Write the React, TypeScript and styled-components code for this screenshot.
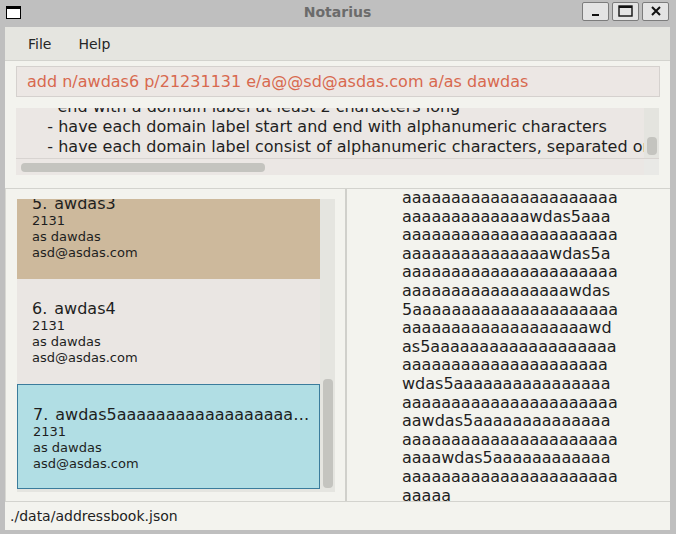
import React from 'react';
import styled, { createGlobalStyle } from 'styled-components';

const GlobalStyle = createGlobalStyle`
  html, body {
    margin: 0;
    padding: 0;
    background: #bfbfbf;
    font-family: "DejaVu Sans", "Liberation Sans", sans-serif;
  }
`;

const Window = styled.div`
  width: 676px;
  height: 534px;
  display: flex;
  flex-direction: column;
  background: #bfbfbf;
  overflow: hidden;
`;

const TitleBar = styled.div`
  height: 27px;
  flex: none;
  display: grid;
  grid-template-columns: 1fr auto 1fr;
  align-items: center;
  padding: 0 7px 0 6px;
`;

const AppIcon = styled.div`
  width: 13px;
  height: 9px;
  border: 1px solid #000;
  border-top-width: 3px;
  background: #fff;
  margin-top: -2px;
`;

const Title = styled.div`
  font-size: 14px;
  font-weight: bold;
  color: #6b6b6b;
  margin-top: -3px;
`;

const WinButtons = styled.div`
  justify-self: end;
  display: flex;
  gap: 3px;
  margin-top: -5px;
`;

const WinButton = styled.div`
  width: 25px;
  height: 17px;
  border: 1px solid #7c7c7c;
  border-radius: 2px;
  background: #e4e4e4;
  display: flex;
  align-items: center;
  justify-content: center;
`;

const Frame = styled.div`
  flex: 1;
  margin: 0 6px 4px 5px;
  display: flex;
  flex-direction: column;
  background: #f3f3ee;
  min-height: 0;
`;

const MenuBar = styled.div`
  height: 33px;
  flex: none;
  display: flex;
  align-items: center;
  gap: 27px;
  padding-left: 23px;
  background: #e5e5e0;
  border-bottom: 1px solid #d3d3ce;
  font-size: 14px;
  color: #262626;
`;

const TopSection = styled.div`
  flex: none;
  height: 127px;
  padding: 5px 10px 0 11px;
  box-sizing: border-box;
  display: flex;
  flex-direction: column;
  gap: 11px;
`;

const CommandBox = styled.div`
  height: 31px;
  flex: none;
  box-sizing: border-box;
  border: 1px solid #d5d1ce;
  background: #ece7e4;
  color: #d8694f;
  font-size: 16px;
  display: flex;
  align-items: center;
  padding-left: 10px;
  white-space: nowrap;
`;

const ResultBox = styled.div`
  height: 67px;
  flex: none;
  margin-right: 1px;
  display: grid;
  grid-template-columns: 1fr 15px;
  grid-template-rows: 1fr 16px;
  background: #ebe7e4;
`;

const ResultViewport = styled.div`
  overflow: hidden;
  border-bottom: 1px solid #d8d4d1;
`;

const ResultText = styled.pre`
  margin: -11px 0 0 11px;
  font-family: "DejaVu Sans", sans-serif;
  font-size: 16px;
  line-height: 20px;
  color: #1f1f1f;
`;

const VTrack = styled.div`
  background: #e4e4df;
  border-bottom: 1px solid #d8d4d1;
  display: flex;
  flex-direction: column;
  align-items: center;
  padding-top: 29px;
  box-sizing: border-box;
`;

const VThumb = styled.div<{ h: number }>`
  width: 10px;
  height: ${p => p.h}px;
  border-radius: 4px;
  background: #c4c4bf;
`;

const HTrack = styled.div`
  background: #ebe7e4;
  display: flex;
  align-items: center;
  padding-left: 5px;
`;

const HThumb = styled.div`
  width: 244px;
  height: 9px;
  border-radius: 4px;
  background: #c4c4bf;
`;

const Corner = styled.div`
  background: #e9e9e6;
`;

const Split = styled.div`
  flex: 1;
  min-height: 0;
  display: flex;
  border-top: 1px solid #d3d3ce;
`;

const LeftPane = styled.div`
  width: 342px;
  flex: none;
  box-sizing: border-box;
  padding: 10px 10px 9px 11px;
  border-left: 1px solid #d8d8d3;
  border-right: 2px solid #d0d0cb;
  display: flex;
`;

const ListViewport = styled.div`
  flex: 1;
  display: flex;
  background: #e5e5e0;
  overflow: hidden;
`;

const CardColumn = styled.div`
  width: 303px;
  flex: none;
  margin-top: -25px;
  display: flex;
  flex-direction: column;
`;

type Tone = 'tan' | 'plain' | 'selected';

const toneColors: Record<Tone, string> = {
  tan: '#cdb99c',
  plain: '#eae6e3',
  selected: '#b1dee4',
};

const Card = styled.div<{ tone: Tone }>`
  height: 105px;
  flex: none;
  box-sizing: border-box;
  padding: ${p => (p.tone === 'selected' ? '20px 2px 0 15px' : '20px 3px 0 15px')};
  background: ${p => toneColors[p.tone]};
  border: ${p => (p.tone === 'selected' ? '1px solid #3b7c9c' : 'none')};
  color: #1e1e1e;
`;

const CardTitle = styled.div`
  display: flex;
  gap: 7px;
  font-size: 16px;
  line-height: 19px;
  white-space: nowrap;
`;

const CardName = styled.span`
  overflow: hidden;
  text-overflow: ellipsis;
`;

const CardLine = styled.div`
  font-size: 13px;
  line-height: 16px;
`;

const ListScroll = styled.div`
  flex: 1;
  display: flex;
  flex-direction: column;
  justify-content: flex-end;
  align-items: center;
  padding: 0 0 4px 1px;
`;

const RightPane = styled.div`
  flex: 1;
  overflow: hidden;
  padding-left: 55px;
`;

const DetailText = styled.div`
  font-size: 16px;
  line-height: 18.6px;
  color: #1e1e1e;
  white-space: pre;
`;

const StatusBar = styled.div`
  height: 28px;
  flex: none;
  border-top: 1px solid #d3d3ce;
  display: flex;
  align-items: center;
  padding-left: 5px;
  font-size: 14px;
  color: #1e1e1e;
`;

const a = (n: number) => 'a'.repeat(n);

const detailLines = [
  a(22),
  a(13) + 'wdas5' + a(3),
  a(22),
  a(15) + 'wdas5' + a(1),
  a(22),
  a(17) + 'wdas',
  '5' + a(21),
  a(19) + 'wd',
  'as5' + a(19),
  a(21),
  'wdas5' + a(16),
  a(22),
  'aa' + 'wdas5' + a(14),
  a(22),
  a(4) + 'wdas5' + a(12),
  a(22),
  a(5),
];

const persons: { index: number; name: string; tone: Tone }[] = [
  { index: 5, name: 'awdas3', tone: 'tan' },
  { index: 6, name: 'awdas4', tone: 'plain' },
  { index: 7, name: 'awdas5' + a(40), tone: 'selected' },
];

const resultText = [
  '      end with a domain label at least 2 characters long',
  '    - have each domain label start and end with alphanumeric characters',
  '    - have each domain label consist of alphanumeric characters, separated only by hyphens, if any.',
].join('\n');

const App = () => {
  return (
    <>
      <GlobalStyle />
      <Window>
        <TitleBar>
          <AppIcon />
          <Title>Notarius</Title>
          <WinButtons>
            <WinButton>
              <svg width="11" height="11" viewBox="0 0 11 11">
                <rect x="2" y="8" width="7" height="2" fill="#111" />
              </svg>
            </WinButton>
            <WinButton>
              <svg width="15" height="12" viewBox="0 0 15 12">
                <rect x="1" y="1" width="13" height="10" fill="none" stroke="#111" strokeWidth="1.4" />
                <rect x="1" y="1" width="13" height="2" fill="#111" />
              </svg>
            </WinButton>
            <WinButton>
              <svg width="12" height="12" viewBox="0 0 12 12">
                <path d="M2 2 L10 10 M10 2 L2 10" stroke="#111" strokeWidth="2" />
              </svg>
            </WinButton>
          </WinButtons>
        </TitleBar>
        <Frame>
          <MenuBar>
            <span>File</span>
            <span>Help</span>
          </MenuBar>
          <TopSection>
            <CommandBox>add n/awdas6 p/21231131 e/a@@sd@asdas.com a/as dawdas</CommandBox>
            <ResultBox>
              <ResultViewport>
                <ResultText>{resultText}</ResultText>
              </ResultViewport>
              <VTrack>
                <VThumb h={18} />
              </VTrack>
              <HTrack>
                <HThumb />
              </HTrack>
              <Corner />
            </ResultBox>
          </TopSection>
          <Split>
            <LeftPane>
              <ListViewport>
                <CardColumn>
                  {persons.map(p => (
                    <Card key={p.index} tone={p.tone}>
                      <CardTitle>
                        <span>{p.index}.</span>
                        <CardName>{p.name}</CardName>
                      </CardTitle>
                      <CardLine>2131</CardLine>
                      <CardLine>as dawdas</CardLine>
                      <CardLine>asd@asdas.com</CardLine>
                    </Card>
                  ))}
                </CardColumn>
                <ListScroll>
                  <VThumb h={109} />
                </ListScroll>
              </ListViewport>
            </LeftPane>
            <RightPane>
              <DetailText>{detailLines.join('\n')}</DetailText>
            </RightPane>
          </Split>
          <StatusBar>./data/addressbook.json</StatusBar>
        </Frame>
      </Window>
    </>
  );
};

export default App;
